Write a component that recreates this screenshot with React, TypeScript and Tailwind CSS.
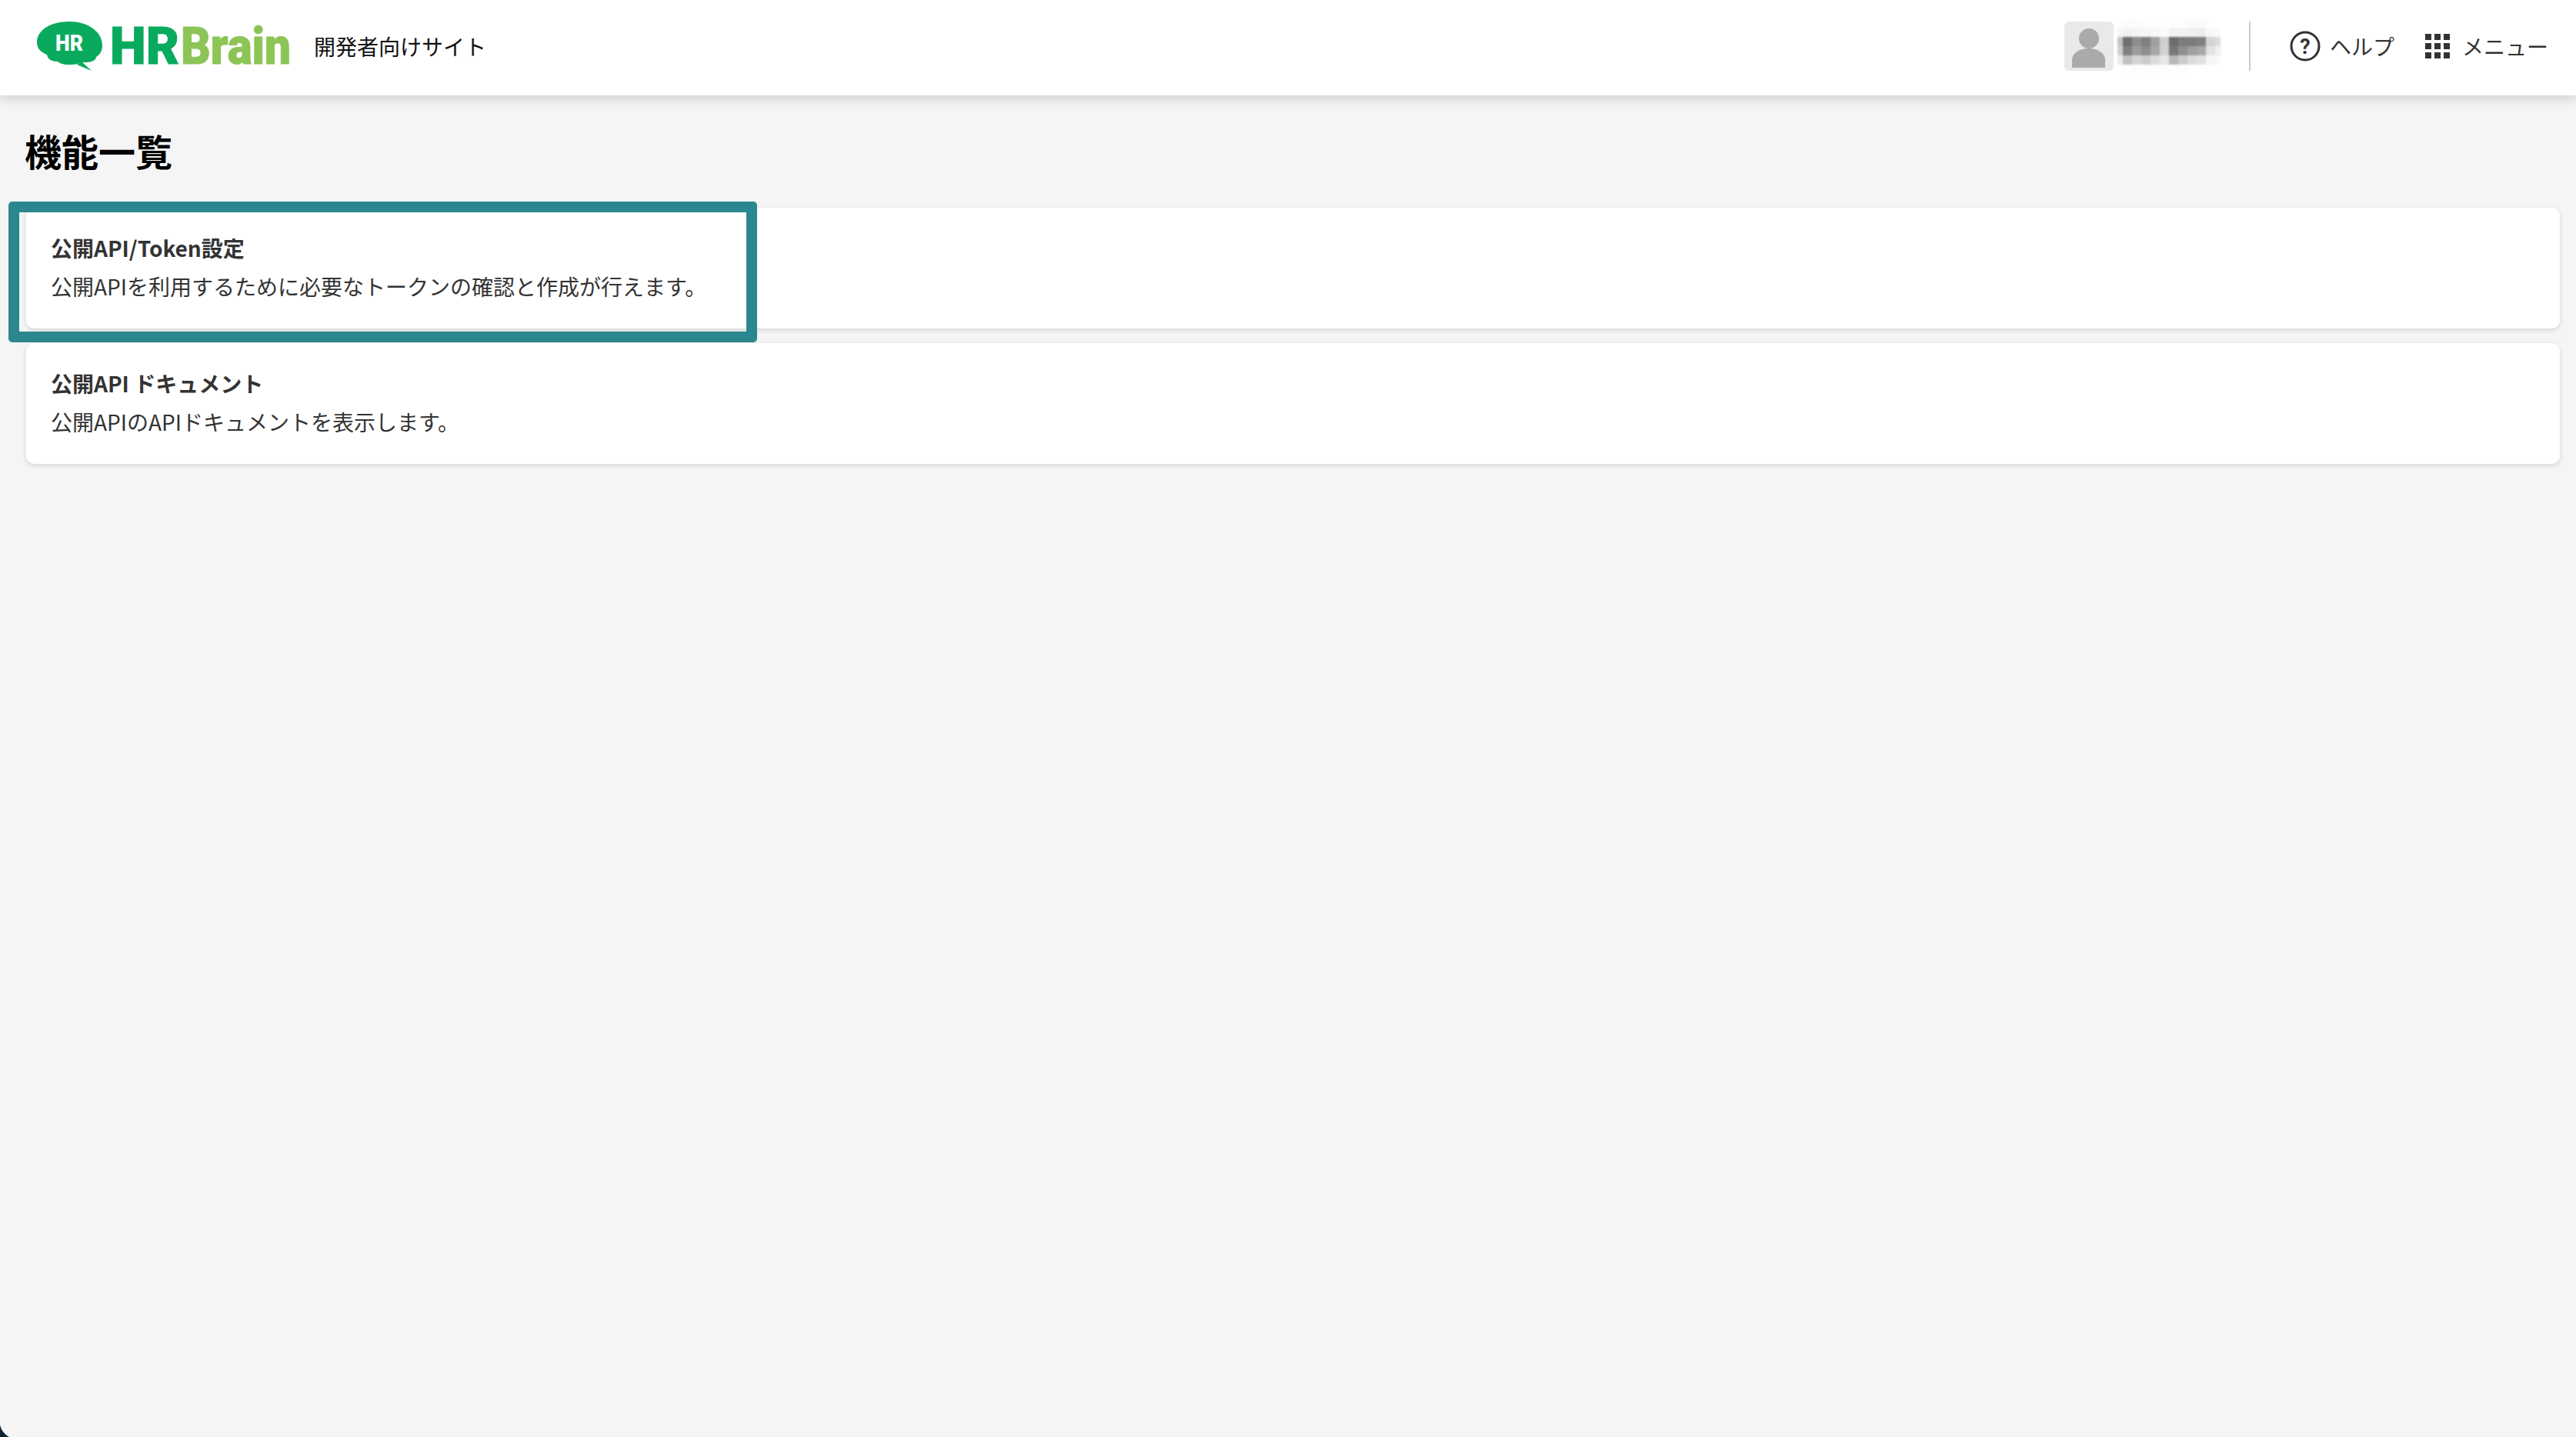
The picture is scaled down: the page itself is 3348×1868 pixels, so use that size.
const blurRows = [
  ['#fdfdfd', '#fcfcfc', '#fcfcfc', '#fdfdfd', '#fefefe', '#fefefe', '#fefefe', '#fdfdfd', '#fbfbfb', '#fbfbfb', '#fefefe', '#ffffff'],
  ['#f6f6f6', '#f2f2f2', '#f4f4f4', '#f5f5f5', '#f8f8f8', '#fbfbfb', '#f2f2f2', '#f2f2f2', '#f0f0f0', '#eeeeee', '#f8f8f8', '#fbfbfb'],
  ['#c4c4c4', '#707070', '#8e8e8e', '#808080', '#a0a0a0', '#cfcfcf', '#6c6c6c', '#7c7c7c', '#7c7c7c', '#808080', '#d4d4d4', '#dcdcdc'],
  ['#d0d0d0', '#808080', '#9c9c9c', '#8e8e8e', '#a8a8a8', '#d2d2d2', '#787878', '#909090', '#a0a0a0', '#a8a8a8', '#e2e2e2', '#f0f0f0'],
  ['#ececec', '#c0c0c0', '#d4d4d4', '#cccccc', '#dcdcdc', '#e6e6e6', '#b8b8b8', '#cccccc', '#dcdcdc', '#e2e2e2', '#f6f6f6', '#fafafa'],
  ['#ffffff', '#fefefe', '#fdfdfd', '#fdfdfd', '#fdfdfd', '#fdfdfd', '#fdfdfd', '#fefefe', '#ffffff', '#ffffff', '#ffffff', '#ffffff'],
];

const cards = [
  { title: '公開API/Token設定', description: '公開APIを利用するために必要なトークンの確認と作成が行えます。', highlighted: true },
  { title: '公開API ドキュメント', description: '公開APIのAPIドキュメントを表示します。' },
];

const Logo = () => (
  <svg width="328" height="64" viewBox="0 0 328 64" className="shrink-0 overflow-visible">
    <path
      d="M42 0C66 0 85 13 85 31C85 38 82 43 77 46C77 50 71 53 65 53L58 53C54 55 50 56 45 56C43 56 42 56 41 56C34 56 29 54 27 52C19 52 14 49 13 43C5 40 0 35 0 27C0 11 18 0 42 0Z"
      fill="#09aa5e"
    />
    <path d="M58 52L71 64L52 56Z" fill="#09aa5e" />
    <text x="42" y="38" textAnchor="middle" fontFamily="Roboto, sans-serif" fontWeight="900" fontSize="29" fill="#fff" textLength="36" lengthAdjust="spacingAndGlyphs">HR</text>
    <text x="95" y="55" fontFamily="Roboto, sans-serif" fontWeight="900" fontSize="66" fill="#09aa5e" stroke="#09aa5e" strokeWidth="1" textLength="90" lengthAdjust="spacingAndGlyphs">HR</text>
    <text x="187" y="55" fontFamily="Roboto, sans-serif" fontWeight="900" fontSize="66" fill="#8cc556" stroke="#8cc556" strokeWidth="1" textLength="143" lengthAdjust="spacingAndGlyphs">Brain</text>
  </svg>
);

const Avatar = () => (
  <div className="w-16 h-16 bg-[#e9e9e9] rounded-md shrink-0">
    <svg width="64" height="64" viewBox="0 0 64 64">
      <circle cx="32" cy="22" r="13" fill="#aaaaaa" />
      <path d="M10 60V50C10 41 20 35 31.5 35C43 35 53 41 53 50V60Z" fill="#aaaaaa" />
    </svg>
  </div>
);

const HelpIcon = () => (
  <svg width="40" height="40" viewBox="0 0 40 40" className="shrink-0">
    <circle cx="20" cy="20" r="18" fill="none" stroke="#333333" strokeWidth="3" />
    <text x="20" y="30" textAnchor="middle" fontFamily="Roboto, sans-serif" fontWeight="700" fontSize="27" fill="#333333">?</text>
  </svg>
);

const MenuIcon = () => (
  <div className="grid grid-cols-[8px_8px_8px] gap-[4px] shrink-0">
    {Array.from({ length: 9 }).map((_, i) => (
      <div key={i} className="w-2 h-2 bg-[#333333]" />
    ))}
  </div>
);

export default function App() {
  return (
    <div className="relative h-[1868px] overflow-hidden bg-[#f5f5f5] font-['Noto_Sans_CJK_JP','Noto_Sans',sans-serif]">
      <header className="relative flex items-center justify-between h-[124px] pb-1 pl-12 pr-[36px] bg-white shadow-[0_4px_16px_rgba(0,0,0,0.16)]">
        <div className="flex items-center">
          <Logo />
          <span className="ml-8 text-[28px] leading-none text-[#111111]">開発者向けサイト</span>
        </div>
        <div className="flex items-center">
          <Avatar />
          <div className="ml-[5px] grid grid-cols-[7px_repeat(10,12px)_7px] blur-[1px]">
            {blurRows.flat().map((color, i) => (
              <div key={i} className="h-3" style={{ backgroundColor: color }} />
            ))}
          </div>
          <div className="ml-[37px] w-[2px] h-16 bg-[#cccccc]" />
          <div className="ml-[51px] flex items-center gap-[12px]">
            <HelpIcon />
            <span className="text-[28px] leading-none text-[#333333]">ヘルプ</span>
          </div>
          <div className="ml-10 flex items-center gap-[16px]">
            <MenuIcon />
            <span className="text-[28px] leading-none text-[#333333]">メニュー</span>
          </div>
        </div>
      </header>

      <main className="pl-[34px] pr-[21px]">
        <h1 className="-ml-[2px] mt-[41px] mb-[45px] h-[60px] text-[48px] leading-[60px] font-bold text-black">機能一覧</h1>
        <div className="flex flex-col gap-[19px]">
          {cards.map((card) => (
            <div key={card.title} className="relative h-[157px] pt-[28px] px-8 bg-white rounded-[10px] shadow-[0_2px_6px_rgba(0,0,0,0.14)]">
              <p className="text-[28px] leading-[49px] font-bold text-[#333333]">{card.title}</p>
              <p className="mt-[1px] text-[28px] leading-[49px] text-[#333333]">{card.description}</p>
              {card.highlighted && (
                <div className="absolute -left-[23px] -top-[8px] w-[973px] h-[183px] border-[14px] border-[#2b878f] rounded-[5px]" />
              )}
            </div>
          ))}
        </div>
      </main>

      <svg width="12" height="16" viewBox="0 0 12 16" className="absolute left-0 bottom-0">
        <path d="M0 0C1 6 5 12 12 16H0Z" fill="#0b2233" />
      </svg>
    </div>
  );
}
